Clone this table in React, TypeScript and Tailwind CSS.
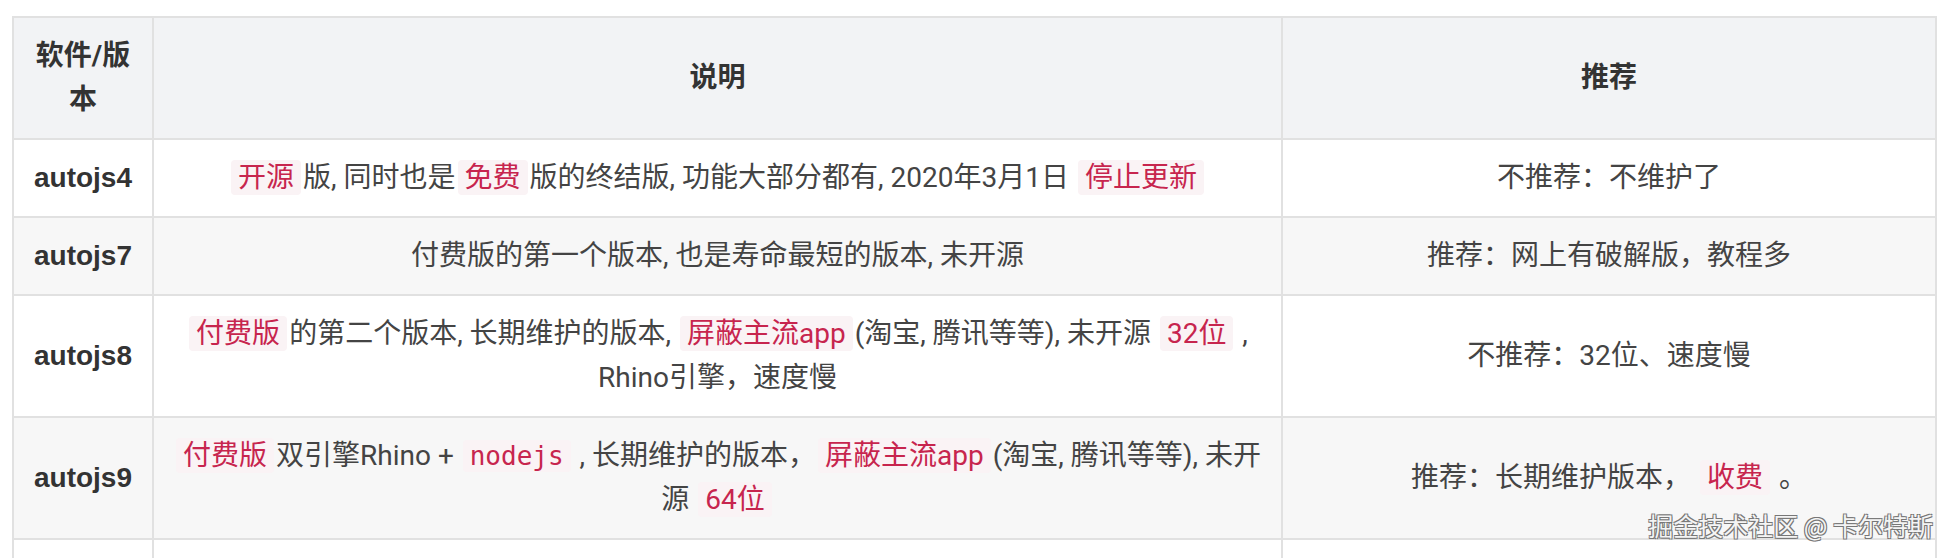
import React from "react";

const C = ({ children, mono = false }: { children: React.ReactNode; mono?: boolean }) => (
  <code
    className={
      "mx-[2px] rounded-[4px] bg-[#faf3f5] px-[7px] py-[1px] text-[#c7254e] " +
      (mono
        ? "[font-family:'DejaVu_Sans_Mono','Noto_Sans_CJK_SC',monospace] text-[26px]"
        : "[font-family:Roboto,'Noto_Sans_CJK_SC',sans-serif]")
    }
  >
    {children}
  </code>
);

const tdBase = "border-2 border-[#e1e1e1] px-[14px] py-[16px] text-center align-middle";

const L = ({ children }: { children: React.ReactNode }) => (
  <span className="whitespace-nowrap">{children}</span>
);

export default function App() {
  const rows: { name: string; desc: React.ReactNode; rec: React.ReactNode }[] = [
    {
      name: "autojs4",
      desc: (
        <L>
          <C>开源</C>版, 同时也是<C>免费</C>版的终结版, 功能大部分都有, 2020年3月1日 <C>停止更新</C>
        </L>
      ),
      rec: <>不推荐：不维护了</>,
    },
    {
      name: "autojs7",
      desc: <L>付费版的第一个版本, 也是寿命最短的版本, 未开源</L>,
      rec: <>推荐：网上有破解版，教程多</>,
    },
    {
      name: "autojs8",
      desc: (
        <>
          <L>
            <C>付费版</C>的第二个版本, 长期维护的版本, <C>屏蔽主流app</C>(淘宝, 腾讯等等), 未开源 <C>32位</C> ,
          </L>
          <br />
          <L>Rhino引擎，速度慢</L>
        </>
      ),
      rec: <>不推荐：32位、速度慢</>,
    },
    {
      name: "autojs9",
      desc: (
        <>
          <L>
            <C>付费版</C>双引擎Rhino + <C mono>nodejs</C> , 长期维护的版本，<C>屏蔽主流app</C>(淘宝, 腾讯等等), 未开
          </L>
          <br />
          <L>
            源 <C>64位</C>
          </L>
        </>
      ),
      rec: (
        <>
          推荐：长期维护版本， <C>收费</C> 。
        </>
      ),
    },
  ];

  return (
    <div className="relative h-[558px] w-[1950px] overflow-hidden bg-white [font-family:Roboto,'Noto_Sans_CJK_SC',sans-serif] text-[28px] leading-[44px] text-[#444]">
      <table className="ml-[12px] mt-[16px] w-[1923px] table-fixed border-collapse">
        <colgroup>
          <col className="w-[140px]" />
          <col className="w-[1129px]" />
          <col className="w-[654px]" />
        </colgroup>
        <thead>
          <tr className="bg-[#f2f3f5]">
            <th className={tdBase + " font-bold text-[#333]"}>软件/版本</th>
            <th className={tdBase + " font-bold text-[#333]"}>说明</th>
            <th className={tdBase + " font-bold text-[#333]"}>推荐</th>
          </tr>
        </thead>
        <tbody>
          {rows.map((r, i) => (
            <tr key={r.name} className={i % 2 === 1 ? "bg-[#f7f7f7]" : "bg-white"}>
              <td className={tdBase + " font-bold text-[#333] [font-family:'Liberation_Sans',Arial,sans-serif]"}>
                {r.name}
              </td>
              <td className={tdBase}>{r.desc}</td>
              <td className={tdBase}>{r.rec}</td>
            </tr>
          ))}
          <tr className="bg-white">
            <td className={tdBase}>&nbsp;</td>
            <td className={tdBase}>&nbsp;</td>
            <td className={tdBase}>&nbsp;</td>
          </tr>
        </tbody>
      </table>
      <div className="absolute right-[17px] top-[512px] text-[25px] leading-[26px] text-[#f4f4f4] [font-family:'Noto_Sans_CJK_SC',sans-serif] [text-shadow:-1px_-1px_0_#777,1px_-1px_0_#777,-1px_1px_0_#777,1px_1px_0_#777]">
        掘金技术社区 @ 卡尔特斯
      </div>
    </div>
  );
}
